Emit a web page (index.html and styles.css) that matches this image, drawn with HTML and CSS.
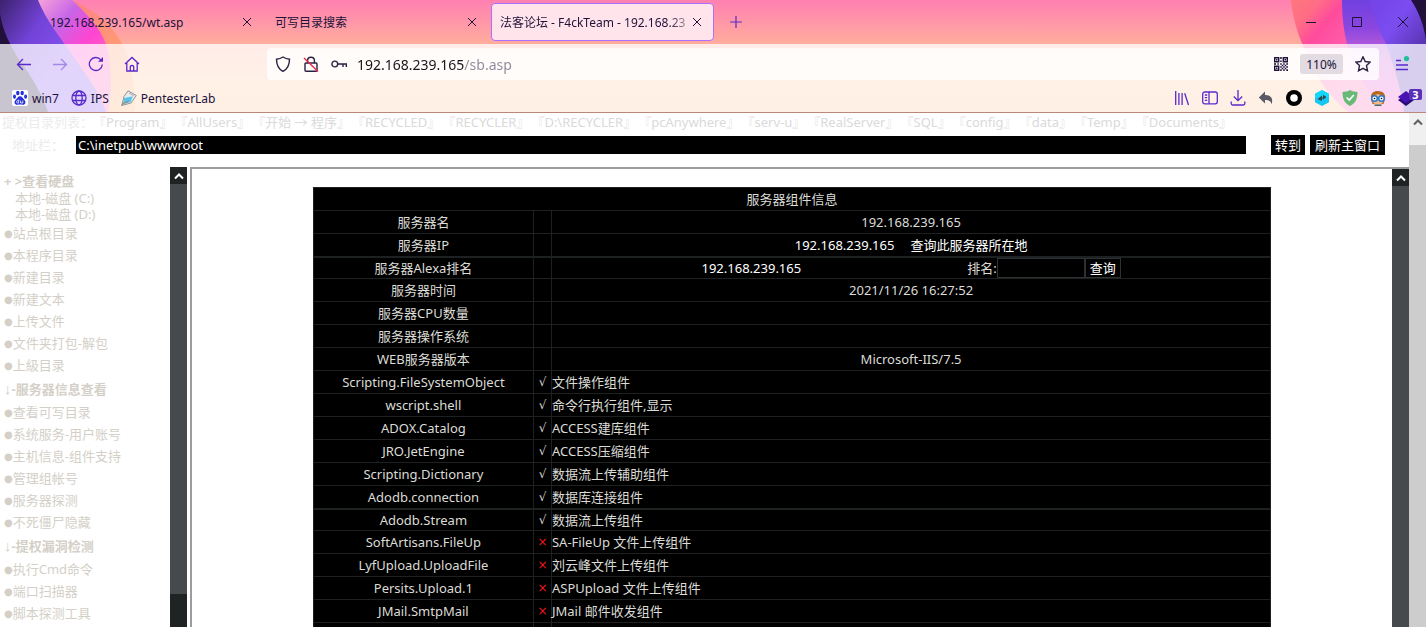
FILE: index.html
```html
<!DOCTYPE html>
<html lang="zh-CN">
<head>
<meta charset="utf-8">
<title>法客论坛 - F4ckTeam - 192.168.239.165</title>
<link rel="stylesheet" href="styles.css">
</head>
<body>
<header class="browser">
  <svg class="art art-left" viewBox="0 0 136 112" aria-hidden="true">
    <defs>
      <linearGradient id="la" x1="0" y1="0" x2="1" y2="1"><stop offset="0" stop-color="#ff5f9a"/><stop offset=".4" stop-color="#ff8a80"/><stop offset="1" stop-color="#ffb066"/></linearGradient>
      <linearGradient id="lb" x1="40" y1="0" x2="105" y2="60" gradientUnits="userSpaceOnUse"><stop offset="0" stop-color="#f4a0dc"/><stop offset=".35" stop-color="#c765e6"/><stop offset=".7" stop-color="#ff45d2"/><stop offset="1" stop-color="#ff5fc0"/></linearGradient>
      <linearGradient id="lc" x1="0" y1="0" x2="75" y2="50" gradientUnits="userSpaceOnUse"><stop offset="0" stop-color="#3c226e"/><stop offset=".5" stop-color="#7343d8"/><stop offset="1" stop-color="#8552f2"/></linearGradient>
    </defs>
    <path fill="url(#la)" d="M70 0C92 8 114 24 125 50C133 70 136 92 134 112H0V0Z"/>
    <path fill="url(#lb)" d="M38 0H72C88 15 100 28 106 44C112 66 112 90 108 112H0V0Z"/>
    <path fill="url(#lc)" d="M0 0H38C46 20 58 34 70 52C84 72 100 92 106 112H0Z"/>
    <path fill="#21103a" d="M0 14C3 32 10 45 20 61C32 77 42 94 48 112H0Z"/>
  </svg>
  <svg class="art art-right" viewBox="0 0 146 112" aria-hidden="true">
    <defs>
      <linearGradient id="ra" x1="10" y1="0" x2="80" y2="60" gradientUnits="userSpaceOnUse"><stop offset="0" stop-color="#ff777c"/><stop offset=".25" stop-color="#ff6d86"/><stop offset=".45" stop-color="#ff4b9c"/><stop offset="1" stop-color="#ff6ab8"/></linearGradient>
      <linearGradient id="rb" x1="0" y1="0" x2="0" y2="1"><stop offset="0" stop-color="#7040df"/><stop offset=".25" stop-color="#8b46df"/><stop offset=".5" stop-color="#c662da"/><stop offset="1" stop-color="#ff55c8"/></linearGradient>
      <linearGradient id="rc" x1="90" y1="0" x2="146" y2="40" gradientUnits="userSpaceOnUse"><stop offset="0" stop-color="#7542e6"/><stop offset=".5" stop-color="#7b4df0"/><stop offset="1" stop-color="#5b35b4"/></linearGradient>
    </defs>
    <path fill="url(#ra)" d="M11 0C13 20 18 34 24 48C34 74 48 96 68 112H146V0Z"/>
    <path fill="url(#rb)" d="M62 0C62 18 64 32 67 44C74 70 88 94 104 112H146V0Z"/>
    <path fill="url(#rc)" d="M88 0C96 20 100 32 106 44C114 66 122 92 124 112H146V0Z"/>
    <path fill="#21103a" d="M131 0C139 12 144 26 146 40V0Z"/>
  </svg>

  <nav class="tabs" aria-label="标签页">
    <div class="tab"><span class="tab-title">192.168.239.165/wt.asp</span><button class="tab-close" aria-label="关闭"><svg viewBox="0 0 10 10"><path d="M1 1l8 8M9 1l-8 8"/></svg></button></div>
    <div class="tab"><span class="tab-title">可写目录搜索</span><button class="tab-close" aria-label="关闭"><svg viewBox="0 0 10 10"><path d="M1 1l8 8M9 1l-8 8"/></svg></button></div>
    <div class="tab tab-active"><span class="tab-title tab-fade">法客论坛 - F4ckTeam - 192.168.23</span><button class="tab-close" aria-label="关闭"><svg viewBox="0 0 10 10"><path d="M1 1l8 8M9 1l-8 8"/></svg></button></div>
    <button class="tab-new" aria-label="新建标签页"><svg viewBox="0 0 12 12"><path d="M6 0v12M0 6h12"/></svg></button>
    <div class="window-controls">
      <button aria-label="最小化"><svg viewBox="0 0 10 10"><path d="M0 5.500h10"/></svg></button>
      <button aria-label="最大化"><svg viewBox="0 0 10 10"><path d="M.5.5h9v9h-9z"/></svg></button>
      <button aria-label="关闭窗口"><svg viewBox="0 0 10 10"><path d="M0 0l10 10M10 0L0 10"/></svg></button>
    </div>
  </nav>

  <div class="toolbar">
    <div class="nav-buttons">
      <button aria-label="后退"><svg viewBox="0 0 16 16"><path d="M15 8.500H1.500M7 3L1.500 8.500L7 14"/></svg></button>
      <button class="dim" aria-label="前进"><svg viewBox="0 0 16 16"><path d="M1 8.500h13.500M9 3l5.500 5.500L9 14"/></svg></button>
      <button aria-label="刷新"><svg viewBox="0 0 16 16"><path d="M14.300 8.500A6.500 6.500 0 1 1 12.800 3.800"/><path class="fill" d="M10 5.800h5V1z"/></svg></button>
      <button aria-label="主页"><svg viewBox="0 0 16 16"><path d="M1 8L8 1.500L15 8M2.800 7v8h10.400V7M6.300 15v-4.200q0-1.300 1.700-1.300t1.700 1.300V15"/></svg></button>
    </div>
    <div class="urlbar">
      <svg class="ink" viewBox="0 0 16 16"><path d="M8 1c2 1.300 4 2 6.500 2.200C14.500 9.500 12.500 13 8 15.400C3.500 13 1.500 9.500 1.500 3.200C4 3 6 2.300 8 1z"/></svg>
      <svg class="ink" viewBox="0 0 16 16"><path d="M4.600 7V4.600a3.400 3.400 0 0 1 6.800 0V7M3 15.200h10q1 0 1-1V8q0-1-1-1H3q-1 0-1 1v6.200q0 1 1 1z"/><path class="slash" d="M1 2l14 13.500"/></svg>
      <svg class="ink" viewBox="0 0 16 16"><circle cx="3.800" cy="8" r="2.900"/><path d="M6.700 8H16M12 8v3M15.300 8v3"/></svg>
      <input class="url" type="text" aria-label="地址" value="192.168.239.165/sb.asp">
      <button class="plain" aria-label="二维码"><svg class="qr" viewBox="0 0 14 14"><path d="M.7.700h4v4h-4zM9.300.700h4v4h-4zM.7 9.300h4v4h-4z"/><path class="bits" d="M2 2h1.500v1.500H2zM10.500 2H12v1.500h-1.500zM2 10.500h1.500V12H2zM6.200 0h1.500v2H6.200zM6.200 3.500h1.500V5H6.200zM0 6.300h2v1.500H0zM3.300 6.300h1.500v1.500H3.300zM6.200 6.300h1.500v1.500H6.200zM7.700 7.800h1.500v1.500H7.700zM9.200 6.300h1.500v1.500H9.200zM12.300 6.300H14v1.500h-1.700zM10.700 7.800h1.500v1.500h-1.500zM6.200 9.300h1.500v1.500H6.200zM9.200 9.300h1.500v1.500H9.200zM12.300 9.300H14v1.500h-1.700zM7.700 10.800h1.500v1.500H7.700zM10.700 10.800h1.500v1.500h-1.500zM6.200 12.300h1.500V14H6.200zM9.200 12.300h1.500V14H9.200zM12.300 12.300H14V14h-1.700z"/></svg></button>
      <button class="zoom">110%</button>
      <button class="plain" aria-label="收藏"><svg class="ink star" viewBox="0 0 16 16"><path d="M8 .8l2.200 4.700 5 .6-3.700 3.500 1 5.200L8 12.300l-4.500 2.500 1-5.200L.8 6.100l5-.6z"/></svg></button>
    </div>
    <button class="menu" aria-label="菜单"><svg viewBox="0 0 16 16"><path d="M2 4.500h5M2 9h12M2 13.500h12"/><circle cx="12.500" cy="2.600" r="2.600"/></svg></button>
  </div>

  <div class="bookmarks">
    <a href="#"><svg viewBox="0 0 16 16"><rect width="16" height="16" rx="2" fill="#fff"/><g fill="#2630dd"><ellipse cx="5.800" cy="3" rx="1.700" ry="2.300"/><ellipse cx="10.200" cy="3" rx="1.700" ry="2.300"/><ellipse cx="2.500" cy="6.700" rx="1.500" ry="2.100"/><ellipse cx="13.600" cy="6.700" rx="1.500" ry="2.100"/><path d="M8 6.300c2.300 0 2.600 2 4.200 3.500c2.400 2.100 1.100 5.400-1.600 5c-1.600-.3-3.400-.3-5 0c-3 .4-4.100-3-1.800-5C5.500 8.300 5.800 6.300 8 6.300z"/></g><path d="M6.700 9.600v3.400H5.600q-1.200-.2-1.100-1.400t2.200-1M8.600 10.600v2.400h2.200v-2.400" fill="none" stroke="#fff" stroke-width=".8"/></svg>win7</a>
    <a href="#"><svg class="violet" viewBox="0 0 16 16"><circle cx="8" cy="8" r="7"/><ellipse cx="8" cy="8" rx="3.200" ry="7"/><path d="M1.500 5.500h13M1.500 10.500h13"/></svg>IPS</a>
    <a href="#"><svg viewBox="0 0 16 16"><path d="M7 .8L15.300 5.500L10 13L.8 15.400L3 6.500z" fill="#e9eaea" stroke="#8d9297"/><path d="M3.300 8l8.500-1.800L9.600 12L2 14.300z" fill="#59c2ec"/><path d="M.6 15.500l2-2.300 5-1.700" stroke="#9a7f61" fill="none"/><path d="M8 3l5 3" stroke="#aeb3b7"/></svg>PentesterLab</a>
    <div class="extensions">
      <button aria-label="书库"><svg class="violet" viewBox="0 0 16 16"><path d="M1.700 1v14M4.900 3v12M8.100 3v12M10.700 3.200L14.500 15"/></svg></button>
      <button aria-label="侧栏"><svg class="violet" viewBox="0 0 16 16"><rect x=".7" y="2" width="14.600" height="11.800" rx="2"/><path d="M7 2v11.800M2.800 5h2.400M2.800 7.700h2.400M2.800 10.400h2.400"/></svg></button>
      <button aria-label="下载"><svg class="violet" viewBox="0 0 16 16"><path d="M8 0v10.500M3.800 6.500L8 10.700l4.200-4.200M1.200 11.500v2q0 1.500 1.500 1.500h10.600q1.500 0 1.500-1.500v-2"/></svg></button>
      <button aria-label="撤销"><svg viewBox="0 0 16 16"><path fill="#5a5a66" d="M7 1.500v3.500c6 0 8.500 3.500 6.500 9.500c-.5-3.500-2.500-4.500-6.500-4.500v3.500L.8 7.500z"/></svg></button>
      <button aria-label="圆环"><svg viewBox="0 0 16 16"><circle cx="8" cy="8" r="8"/><circle cx="8" cy="8" r="3.800" fill="#fff"/></svg></button>
      <button aria-label="同步"><svg viewBox="0 0 16 16"><path fill="#13c7f5" d="M8 0l7 3.700v8.600L8 16l-7-3.700V3.700z"/><path fill="#0de3ff" d="M8 0l7 3.700v4.300H1V3.700z" opacity=".6"/><path fill="#34464c" d="M3.500 9L8 5.500v2h1v1H8v2.500zM12.500 7L9 4.800v5z"/></svg></button>
      <button aria-label="防护"><svg viewBox="0 0 16 16"><path fill="#68b978" d="M8 0c2.500 1.500 5 1.900 7.500 2C15.500 9.500 13 13.500 8 16C3 13.500.5 9.500.5 2C3 1.900 5.500 1.500 8 0z"/><path d="M4.600 7.500L7.300 10l4.500-5" fill="none" stroke="#fff" stroke-width="1.600"/></svg></button>
      <button aria-label="助手"><svg viewBox="0 0 16 16"><path fill="#b46a22" d="M1 9C0 3 4 .8 8 1s8 2 7 8l-1.500 5h-11z"/><path fill="#f4b98b" d="M3 6l5-2 5 2v6c-2 4-8 4-10 0z"/><path fill="#3c6f6b" d="M4 14.500h8L11 16H5z"/><circle cx="4.500" cy="8.500" r="2.800" fill="#fff" stroke="#2679c9" stroke-width="1.500"/><circle cx="11.500" cy="8.500" r="2.800" fill="#fff" stroke="#2679c9" stroke-width="1.500"/><circle cx="4.500" cy="8.500" r=".8"/><circle cx="11.500" cy="8.500" r=".8"/></svg></button>
      <button class="stack" aria-label="扩展"><svg viewBox="0 0 16 16"><path fill="#2b0a78" d="M0 10l8-5 8 5-8 6z"/><path fill="#4913b4" d="M0 7l8-6 8 6-8 6z"/></svg><span class="badge">3</span></button>
    </div>
  </div>
</header>

<div class="viewport">
  <main class="page">
    <nav class="paths"><span class="paths-label">提权目录列表：</span><a href="#"><i>『</i>Program<i>』</i></a><a href="#"><i>『</i>AllUsers<i>』</i></a><a href="#"><i>『</i>开始 → 程序<i>』</i></a><a href="#"><i>『</i>RECYCLED<i>』</i></a><a href="#"><i>『</i>RECYCLER<i>』</i></a><a href="#"><i>『</i>D:\RECYCLER<i>』</i></a><a href="#"><i>『</i>pcAnywhere<i>』</i></a><a href="#"><i>『</i>serv-u<i>』</i></a><a href="#"><i>『</i>RealServer<i>』</i></a><a href="#"><i>『</i>SQL<i>』</i></a><a href="#"><i>『</i>config<i>』</i></a><a href="#"><i>『</i>data<i>』</i></a><a href="#"><i>『</i>Temp<i>』</i></a><a href="#"><i>『</i>Documents<i>』</i></a></nav>
    <form class="address">
      <label for="dir">地址栏：</label>
      <input id="dir" type="text" value="C:\inetpub\wwwroot">
      <button type="button" class="go">转到</button>
      <button type="button">刷新主窗口</button>
    </form>
    <div class="frames">
      <aside class="side">
        <nav class="side-list">
          <a class="drives" href="#"><b>+ &gt;查看硬盘</b></a>
          <a class="drive" href="#">本地-磁盘 (C:)</a>
          <a class="drive" href="#">本地-磁盘 (D:)</a>
          <a href="#"><span class="dot">●</span>站点根目录</a>
          <a href="#"><span class="dot">●</span>本程序目录</a>
          <a href="#"><span class="dot">●</span>新建目录</a>
          <a href="#"><span class="dot">●</span>新建文本</a>
          <a href="#"><span class="dot">●</span>上传文件</a>
          <a href="#"><span class="dot">●</span>文件夹打包-解包</a>
          <a href="#"><span class="dot">●</span>上級目录</a>
          <h2><span class="arrow">↓</span>-服务器信息查看</h2>
          <a href="#"><span class="dot">●</span>查看可写目录</a>
          <a href="#"><span class="dot">●</span>系统服务-用户账号</a>
          <a href="#"><span class="dot">●</span>主机信息-组件支持</a>
          <a href="#"><span class="dot">●</span>管理组帐号</a>
          <a href="#"><span class="dot">●</span>服务器探测</a>
          <a href="#"><span class="dot">●</span>不死僵尸隐藏</a>
          <h2><span class="arrow">↓</span>-提权漏洞检测</h2>
          <a href="#"><span class="dot">●</span>执行Cmd命令</a>
          <a href="#"><span class="dot">●</span>端口扫描器</a>
          <a href="#"><span class="dot">●</span>脚本探测工具</a>
        </nav>
        <div class="scroll scroll-side"><span class="scroll-up"><svg viewBox="0 0 10 8"><path d="M1 6.500l4-4 4 4"/></svg></span><span class="thumb"></span></div>
      </aside>
      <section class="content">
        <div class="content-body">
          <table class="info">
            <colgroup><col class="c-name"><col class="c-mark"><col></colgroup>
            <tbody>
            <tr><th colspan="3">服务器组件信息</th></tr>
            <tr><td>服务器名</td><td></td><td class="mid">192.168.239.165</td></tr>
            <tr><td>服务器IP</td><td></td><td class="mid lit"><span class="ip">192.168.239.165</span><a href="#">查询此服务器所在地</a></td></tr>
            <tr class="thick"><td>服务器Alexa排名</td><td></td><td class="mid"><div class="alexa"><span class="lit">192.168.239.165</span><span class="rank"><label for="rank">排名:</label><input id="rank" type="text"><button type="button">查询</button></span></div></td></tr>
            <tr><td>服务器时间</td><td></td><td class="mid">2021/11/26 16:27:52</td></tr>
            <tr><td>服务器CPU数量</td><td></td><td></td></tr>
            <tr><td>服务器操作系统</td><td></td><td></td></tr>
            <tr><td>WEB服务器版本</td><td></td><td class="mid">Microsoft-IIS/7.5</td></tr>
            <tr><td>Scripting.FileSystemObject</td><td class="yes">√</td><td>文件操作组件</td></tr>
            <tr><td>wscript.shell</td><td class="yes">√</td><td>命令行执行组件,显示</td></tr>
            <tr><td>ADOX.Catalog</td><td class="yes">√</td><td>ACCESS建库组件</td></tr>
            <tr><td>JRO.JetEngine</td><td class="yes">√</td><td>ACCESS压缩组件</td></tr>
            <tr><td>Scripting.Dictionary</td><td class="yes">√</td><td>数据流上传辅助组件</td></tr>
            <tr><td>Adodb.connection</td><td class="yes">√</td><td>数据库连接组件</td></tr>
            <tr class="thick"><td>Adodb.Stream</td><td class="yes">√</td><td>数据流上传组件</td></tr>
            <tr><td>SoftArtisans.FileUp</td><td class="no">×</td><td>SA-FileUp 文件上传组件</td></tr>
            <tr><td>LyfUpload.UploadFile</td><td class="no">×</td><td>刘云峰文件上传组件</td></tr>
            <tr><td>Persits.Upload.1</td><td class="no">×</td><td>ASPUpload 文件上传组件</td></tr>
            <tr><td>JMail.SmtpMail</td><td class="no">×</td><td>JMail 邮件收发组件</td></tr>
            <tr><td></td><td></td><td></td></tr>
            </tbody>
          </table>
        </div>
        <div class="scroll"><span class="scroll-up"><svg viewBox="0 0 10 8"><path d="M1 6.500l4-4 4 4"/></svg></span><span class="thumb"></span></div>
      </section>
    </div>
  </main>
  <div class="scroll scroll-page"><span class="scroll-up"><svg viewBox="0 0 10 8"><path d="M1 6.500l4-4 4 4"/></svg></span><span class="thumb"></span></div>
</div>
</body>
</html>
```
FILE: styles.css
```css
* { box-sizing: border-box; }

body {
  margin: 0;
  height: 100vh;
  overflow: hidden;
  display: flex;
  flex-direction: column;
  background: #fff;
  font-family: "Noto Sans", "Noto Sans CJK SC", sans-serif;
  font-size: 13px;
}

button {
  font: inherit;
  color: inherit;
  padding: 0;
  border: 0;
  background: none;
}

input { font: inherit; min-width: 0; }
a { color: inherit; text-decoration: none; }
svg { display: block; flex: none; }

/* browser chrome */
.browser {
  position: relative;
  flex: none;
  color: #20123a;
  font-size: 12px;
  background: linear-gradient(#ff80b2 0, #ffad9d 44px, #ffc499 80px, #ffc090 100%);
  border-bottom: 1px solid #b98878;
}

.art { position: absolute; top: 0; height: 112px; }
.art-left { left: 0; width: 136px; }
.art-right { right: 0; width: 146px; }

.tabs {
  position: relative;
  display: flex;
  align-items: center;
  gap: 2px;
  height: 44px;
  padding-left: 41px;
}

.tab {
  display: flex;
  align-items: center;
  width: 223px;
  height: 38px;
  padding: 0 11px 0 8px;
  border: 1px solid transparent;
  border-radius: 4px;
}

.tab-active { background: #ffe5eb; border-color: #ac70ff; }
.tab-title { flex: 1; min-width: 0; overflow: hidden; white-space: nowrap; }
.tab-fade { mask-image: linear-gradient(to right, #000 168px, transparent 198px); }
.tab-close svg { width: 10px; height: 10px; }

.tabs svg { fill: none; stroke: #20123a; }
.tabs .tab-new { width: 40px; display: grid; place-items: center; }
.tabs .tab-new svg { width: 12px; height: 12px; stroke: #592acb; stroke-width: 1.2px; }

.window-controls { display: flex; margin-left: auto; }
.window-controls button { width: 46px; height: 42px; display: grid; place-items: center; }
.window-controls svg { width: 10px; height: 10px; }

.toolbar {
  position: relative;
  display: flex;
  align-items: center;
  height: 40px;
  padding-right: 16px;
  background: rgba(255, 255, 255, .76);
}

.nav-buttons { display: flex; gap: 20px; padding-left: 16px; width: 267px; }
.nav-buttons svg, .menu svg { width: 16px; height: 16px; }
.nav-buttons svg, .menu svg, .violet { fill: none; stroke: #592acb; stroke-width: 1.3px; }
.nav-buttons .fill { fill: #592acb; stroke: none; }
.dim { opacity: .45; }

.urlbar {
  flex: 1;
  display: flex;
  align-items: center;
  gap: 12px;
  height: 32px;
  padding: 0 8px;
  border-radius: 4px;
  background: rgba(255, 255, 255, .8);
}

.urlbar svg { width: 16px; height: 16px; }
.ink { fill: none; stroke: #2b2140; stroke-width: 1.4px; }
.ink .slash { stroke: #e8274b; }

.url {
  flex: 1;
  margin-left: -2px;
  padding: 0;
  border: 0;
  outline: 0;
  font-size: 14px;
  color: transparent;
  background: linear-gradient(to right, #15141a 107px, #8d8799 107px);
  background-clip: text;
}

.urlbar .qr { width: 14px; height: 14px; fill: none; stroke: #20123a; stroke-width: 1.4px; }
.qr .bits { fill: #20123a; stroke: none; }
.zoom { width: 43px; height: 20px; border-radius: 3px; background: #e2dbe2; }
.menu { margin-left: 15px; }
.menu circle { fill: #1fbf9b; stroke: none; }

.bookmarks {
  position: relative;
  display: flex;
  align-items: center;
  gap: 12px;
  height: 28px;
  padding: 0 4px 0 12px;
  background: rgba(255, 255, 255, .76);
}

.bookmarks a { display: flex; align-items: center; gap: 4px; }
.bookmarks svg { width: 16px; height: 16px; }
.extensions { display: flex; gap: 12px; margin-left: auto; }
.stack { position: relative; width: 24px; }
.badge {
  position: absolute;
  top: -1px;
  right: 0;
  width: 13px;
  border-radius: 2px;
  background: #5b2fb5;
  color: #fff;
  font-size: 11px;
  font-weight: 700;
  line-height: 11px;
}

/* page */
.viewport { flex: 1; min-height: 0; display: flex; }
.page { flex: 1; min-width: 0; display: flex; flex-direction: column; }

.paths {
  display: flex;
  flex: none;
  gap: 2px;
  height: 19px;
  line-height: 19px;
  white-space: nowrap;
  color: #dadada;
}
.paths-label { width: 91px; padding-left: 2px; color: #ececec; }
.paths i { font-style: normal; color: #e2e2e2; }

.address {
  display: flex;
  flex: none;
  align-items: center;
  height: 25px;
  padding-right: 24px;
}
.address label { width: 76px; padding-left: 12px; color: #ececec; }
.address input {
  flex: 1;
  height: 18px;
  margin-right: 25px;
  padding: 0 2px;
  border: 0;
  color: #fff;
  background: #000;
}
.address button { height: 20px; padding: 0 5px; line-height: 20px; color: #fff; background: #000; }
.address .go { padding: 0 4px; margin-right: 5px; }

.frames { flex: 1; min-height: 0; display: flex; gap: 3px; padding-top: 10px; }

.side { display: flex; width: 187px; overflow: hidden; color: #d4d0c8; }
.side-list { flex: 1; min-width: 0; padding: 6px 0 0 4px; white-space: nowrap; }
.side-list a { display: block; height: 22px; line-height: 22px; }
.side-list .drives { height: 17px; line-height: 17px; }
.side-list .drive { height: 16px; line-height: 16px; padding-left: 11px; }
.side-list h2 { margin: 0; height: 25px; line-height: 25px; font-size: 13px; }
.dot { font-family: "DejaVu Sans", sans-serif; font-size: 10px; vertical-align: 1px; }
.arrow { font-family: "Liberation Sans", sans-serif; font-size: 15px; font-weight: 400; }

.content {
  flex: 1;
  min-width: 0;
  display: flex;
  border: solid #9c9c9c;
  border-width: 2px 0 0 2px;
}
.content-body { flex: 1; overflow: hidden; padding: 18px 1px 0; }

.info {
  width: 80%;
  margin: 0 auto;
  table-layout: fixed;
  border-collapse: collapse;
  background: #000;
  color: #dcdcd6;
}
.c-name { width: 23%; }
.c-mark { width: 18px; }
.info th, .info td {
  height: 23px;
  padding: 0;
  border: 1px solid #1d2122;
  line-height: 20px;
  font-weight: 400;
  white-space: nowrap;
}
.info .thick td { height: 22px; border-top-width: 2px; }
.info td:first-child, .info .mid { text-align: center; }
.info .lit { color: #fff; }
.ip { margin-right: 16px; }
.info .yes, .info .no { text-align: center; font-family: "DejaVu Sans", sans-serif; font-size: 12px; }
.info .no { color: #f01818; }

.alexa { display: flex; justify-content: center; gap: 166px; height: 20px; }
.rank { display: flex; }
.rank input { width: 88px; height: 20px; background: #000; border: 1px solid #2d3133; color: #fff; }
.rank button { height: 20px; padding: 0 4px; border: 1px solid #2d3133; line-height: 18px; color: #fff; }

/* scroll bars */
.scroll { flex: none; display: flex; flex-direction: column; width: 17px; background: #1f2324; }
.scroll-up { display: grid; place-items: center; height: 17px; background: #1f2324; }
.scroll-up svg { width: 10px; height: 8px; fill: none; stroke: #fff; stroke-width: 2px; }
.thumb { flex: 1; background: #464a4c; }
.scroll-side .thumb { flex: 0 0 92.5%; max-height: calc(100% - 50px); }
.scroll-page { background: #f0f0f0; }
.scroll-page .scroll-up { height: 17px; margin-bottom: 15px; background: #f0f0f0; }
.scroll-page .scroll-up svg { stroke: #606060; }
.scroll-page .thumb { background: #cdcdcd; }
```
